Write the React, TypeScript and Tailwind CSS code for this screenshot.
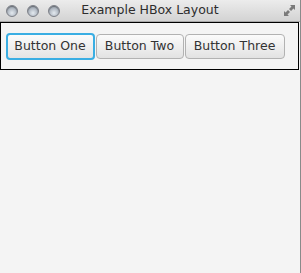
import React from "react";

const font = { fontFamily: '"DejaVu Sans", "Lucida Grande", sans-serif' };

function Light() {
  return (
    <div className="w-[12px] h-[12px] rounded-full border border-[#7d8088] bg-[radial-gradient(circle_at_50%_70%,#e4eaf0_0%,#aeb6c0_55%,#8a929c_100%)] shadow-[inset_0_1px_1px_rgba(0,0,0,0.35)]" />
  );
}

export default function App() {
  return (
    <div className="w-[301px] h-[273px] bg-[#f4f4f4] flex flex-col border-r border-[#8a8a8a] overflow-hidden">
      <div className="h-[22px] shrink-0 flex items-center relative bg-[linear-gradient(#ececec,#d3d3d3)] border-b border-[#a8a8a8]">
        <div className="w-[64px] flex items-center gap-[9px] pl-[6px]">
          <Light />
          <Light />
          <Light />
        </div>
        <div className="flex-1 text-center text-[12.5px] text-[#2d2d2d]" style={font}>
          Example HBox Layout
        </div>
        <div className="w-[64px] flex justify-end pr-[4px]">
          <svg width="13" height="13" viewBox="0 0 13 13">
            <path d="M7 1 L12 1 L12 6 L10.5 4.5 L8 7 L6 5 L8.5 2.5 Z" fill="#7a7a7a" />
            <path d="M6 12 L1 12 L1 7 L2.5 8.5 L5 6 L7 8 L4.5 10.5 Z" fill="#7a7a7a" />
          </svg>
        </div>
      </div>
      <div className="w-[299px] h-[48px] border-[1.5px] border-black flex items-center pl-[4.5px] gap-[1px]">
        <div
          className="w-[89px] h-[27px] flex items-center justify-center rounded-[4px] border-2 border-[#3aaee3] bg-[linear-gradient(#fbfbfb,#e4e4e4)] text-[12.5px] text-[#333]"
          style={font}
        >
          Button One
        </div>
        <div
          className="w-[88px] h-[25px] flex items-center justify-center rounded-[4px] border border-[#b2b2b2] bg-[linear-gradient(#fbfbfb,#e2e2e2)] text-[12.5px] text-[#333]"
          style={font}
        >
          Button Two
        </div>
        <div
          className="w-[100px] h-[25px] flex items-center justify-center rounded-[4px] border border-[#b2b2b2] bg-[linear-gradient(#fbfbfb,#e2e2e2)] text-[12.5px] text-[#333]"
          style={font}
        >
          Button Three
        </div>
      </div>
    </div>
  );
}
